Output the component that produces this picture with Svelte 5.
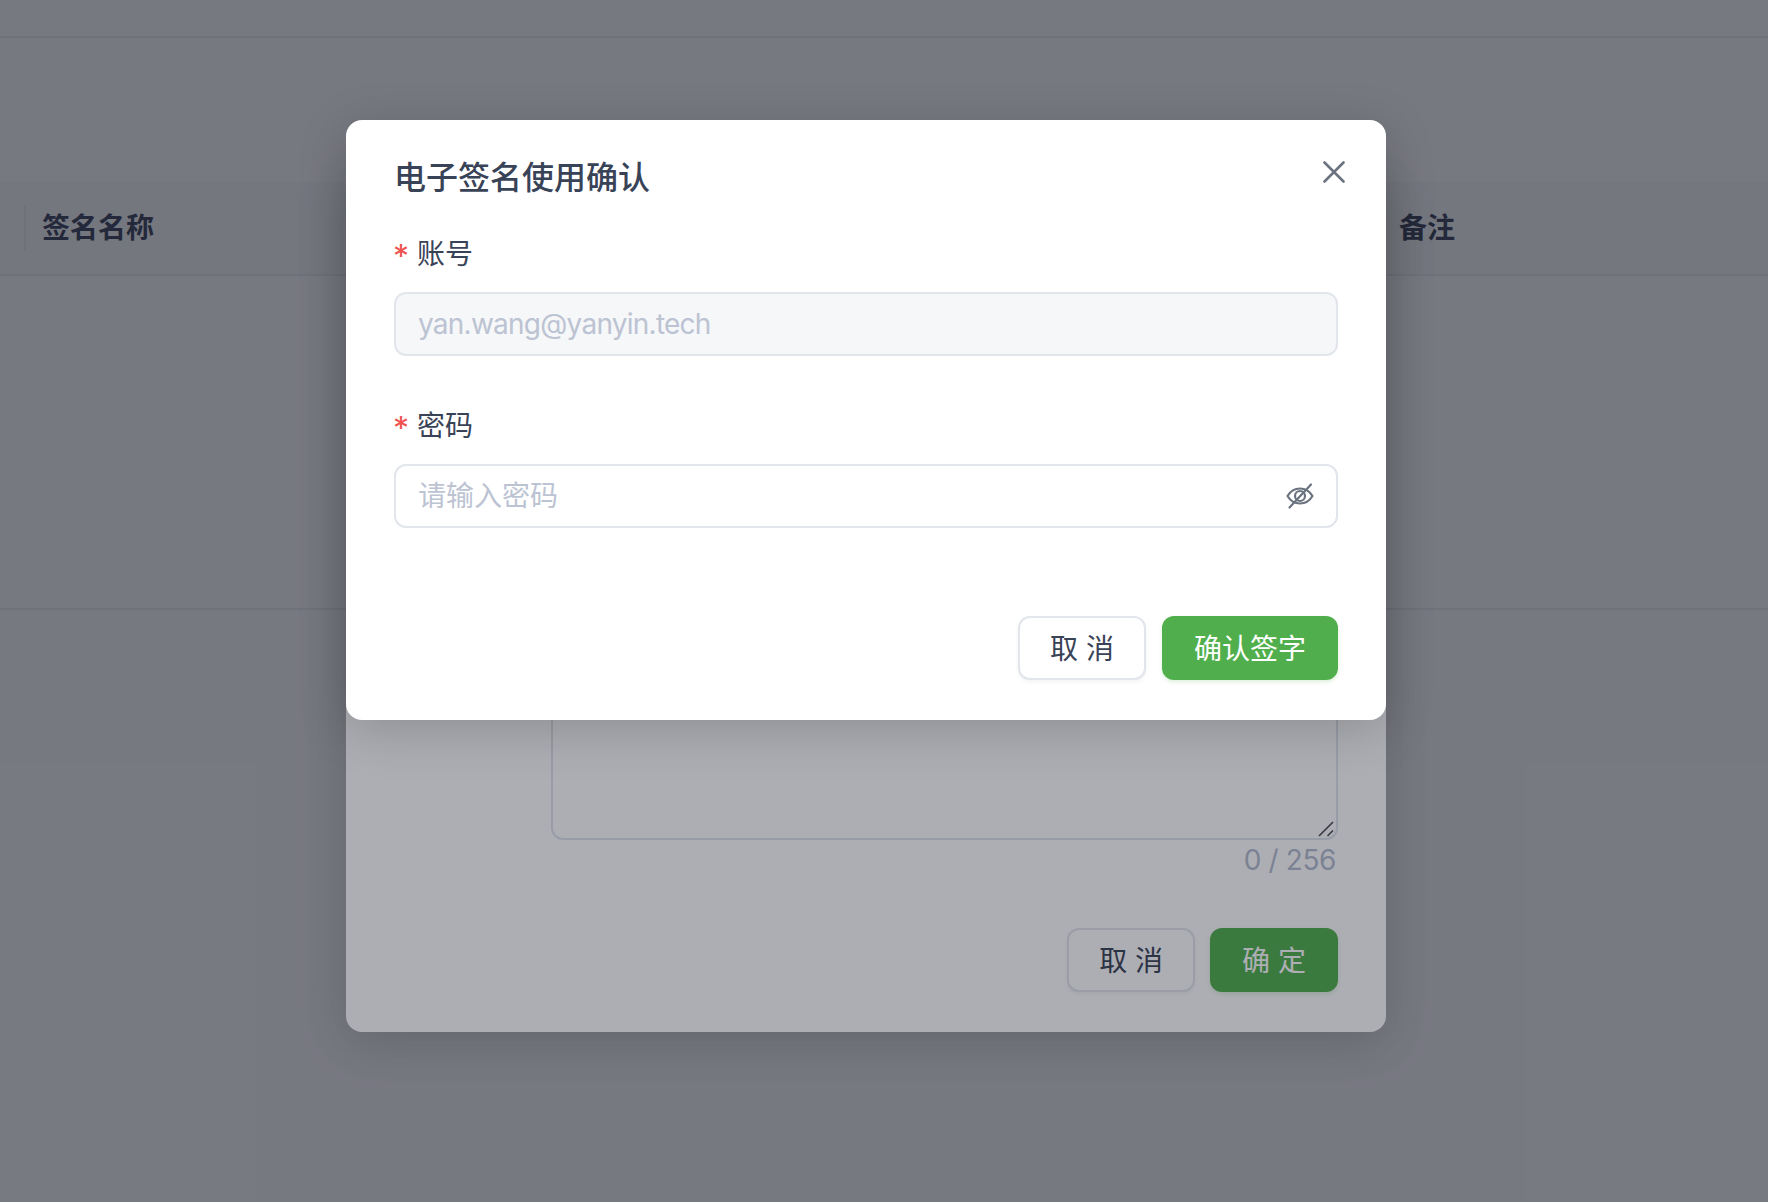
<script lang="ts">
	let password = $state('');
	let showPassword = $state(false);
	let remark = $state('');
</script>

<div class="page">
	<div class="topbar"></div>
	<div class="table">
		<div class="table-head">
			<div class="th name">签名名称</div>
			<div class="th note">备注</div>
		</div>
	</div>
</div>

<div class="layer lower">
	<section class="modal back">
		<div class="remark-wrap">
			<textarea class="remark" bind:value={remark} maxlength="256" aria-label="备注"></textarea>
			<svg class="grip" width="16" height="16" viewBox="0 0 16 16" fill="none" stroke="#4b4d55" stroke-width="1.6">
				<path d="M1 15L15 1M9.5 15L15 9.5" />
			</svg>
		</div>
		<div class="count">{remark.length} / 256</div>
		<div class="footer">
			<button class="btn plain">取 消</button>
			<button class="btn primary">确 定</button>
		</div>
	</section>
</div>

<div class="layer upper">
	<section class="modal front">
		<header class="head">
			<h2>电子签名使用确认</h2>
			<button class="close" aria-label="关闭">
				<svg width="22" height="22" viewBox="0 0 22 22" fill="none" stroke="#6b7280" stroke-width="2.6" stroke-linecap="round">
					<path d="M1.5 1.5l19 19M20.5 1.5l-19 19" />
				</svg>
			</button>
		</header>

		<div class="field">
			<label for="account"><span class="star">*</span>账号</label>
			<div class="input-wrap disabled">
				<input id="account" value="yan.wang@yanyin.tech" disabled />
			</div>
		</div>

		<div class="field">
			<label for="password"><span class="star">*</span>密码</label>
			<div class="input-wrap">
				<input id="password" type={showPassword ? 'text' : 'password'} placeholder="请输入密码" bind:value={password} />
				<button class="eye" aria-label="显示密码" onclick={() => (showPassword = !showPassword)}>
					<svg width="28" height="28" viewBox="0 0 28 28" fill="none" stroke="#6b7280" stroke-width="2.2" stroke-linecap="round" stroke-linejoin="round">
						<path d="M1.5 14C4.5 9 8.8 6.5 14 6.5S23.5 9 26.5 14C23.5 19 19.2 21.5 14 21.5S4.5 19 1.5 14z" />
						<circle cx="14" cy="14" r="5" />
						<path d="M25 2.5L3.5 25.5" />
					</svg>
				</button>
			</div>
		</div>

		<div class="footer">
			<button class="btn plain">取 消</button>
			<button class="btn primary">确认签字</button>
		</div>
	</section>
</div>

<style>
	:global(body) {
		margin: 0;
		background: #fff;
		font-family: Inter, 'Noto Sans CJK SC', sans-serif;
		color: #394357;
	}

	.page {
		height: 1202px;
		overflow: hidden;
	}

	.topbar {
		height: 36px;
		border-bottom: 2px solid #eceef1;
	}

	.table {
		margin-top: 144px;
		height: 426px;
		border-bottom: 2px solid #eceef1;
	}

	.table-head {
		display: flex;
		align-items: center;
		height: 92px;
		background: #f9fafb;
		border-bottom: 2px solid #eceef1;
	}

	.th {
		font-size: 28px;
		line-height: 44px;
		font-weight: 600;
		color: #394357;
	}

	.name {
		margin-left: 24px;
		padding-left: 16px;
		border-left: 2px solid #eceef1;
	}

	.note {
		margin-left: auto;
		margin-right: 313px;
	}

	.layer {
		position: absolute;
		top: 0;
		left: 0;
		box-sizing: border-box;
		width: 100%;
		height: 1202px;
		padding-right: 36px;
		display: flex;
		justify-content: center;
		align-items: flex-start;
		background: rgba(20, 24, 38, 0.35);
		overflow: hidden;
	}

	.modal {
		box-sizing: border-box;
		width: 1040px;
		background: #fff;
		border-radius: 16px;
		box-shadow: 0 10px 50px rgba(0, 0, 0, 0.18);
	}

	.back {
		margin-top: 170px;
		height: 862px;
		padding: 0 48px 40px;
		display: flex;
		flex-direction: column;
		justify-content: flex-end;
		align-items: flex-end;
	}

	.remark-wrap {
		position: relative;
		display: flex;
	}

	.remark {
		box-sizing: border-box;
		display: block;
		width: 787px;
		height: 300px;
		border: 2px solid #dfe3ec;
		border-radius: 12px;
		background: #fff;
		outline: none;
		resize: none;
	}

	.grip {
		position: absolute;
		right: 4px;
		bottom: 3px;
	}

	.count {
		font-size: 28px;
		line-height: 40px;
		letter-spacing: -0.4px;
		color: #b3bcd0;
		margin-right: 2px;
	}

	.back .footer {
		margin-top: 48px;
		gap: 15px;
	}

	.front {
		margin-top: 120px;
		padding: 32px 48px 40px;
	}

	.head {
		display: flex;
		justify-content: space-between;
		align-items: flex-start;
		height: 48px;
		margin-bottom: 32px;
	}

	h2 {
		margin: 2px 0 0;
		font-size: 32px;
		line-height: 48px;
		font-weight: 500;
		color: #394357;
	}

	.close {
		display: flex;
		margin: 9px -7px 0 0;
		padding: 0;
		border: 0;
		background: none;
		cursor: pointer;
	}

	.field {
		margin-bottom: 48px;
	}

	label {
		display: block;
		height: 44px;
		margin-bottom: 16px;
		font-size: 28px;
		line-height: 45px;
		color: #394357;
	}

	.star {
		color: #ef5350;
		font-size: 32px;
		vertical-align: -4px;
		margin: 0 8px 0 -1px;
	}

	.input-wrap {
		box-sizing: border-box;
		display: flex;
		align-items: center;
		height: 64px;
		padding: 0 22px;
		border: 2px solid #e2e5ec;
		border-radius: 12px;
		background: #fff;
	}

	.input-wrap.disabled {
		background: #f6f7f9;
	}

	input {
		flex: 1;
		min-width: 0;
		padding: 0;
		border: 0;
		outline: none;
		background: transparent;
		font: inherit;
		font-size: 28px;
		color: #394357;
	}

	input:disabled {
		color: #bcc3d2;
		-webkit-text-fill-color: #bcc3d2;
		opacity: 1;
		letter-spacing: -0.75px;
	}

	input::placeholder {
		color: #bcc3d2;
		opacity: 1;
	}

	.eye {
		display: flex;
		padding: 0;
		border: 0;
		background: none;
		cursor: pointer;
	}

	.front .footer {
		margin-top: 88px;
	}

	.footer {
		display: flex;
		justify-content: flex-end;
		gap: 16px;
	}

	.btn {
		box-sizing: border-box;
		height: 64px;
		padding: 0 30px 2px;
		border-radius: 12px;
		font: inherit;
		font-size: 28px;
		cursor: pointer;
	}

	.plain {
		background: #fff;
		border: 2px solid #e2e5ec;
		color: #394357;
		box-shadow: 0 2px 4px rgba(0, 0, 0, 0.05);
	}

	.primary {
		background: #50af4c;
		border: 2px solid #50af4c;
		color: #fff;
		box-shadow: 0 2px 4px rgba(80, 175, 76, 0.2);
	}
</style>
